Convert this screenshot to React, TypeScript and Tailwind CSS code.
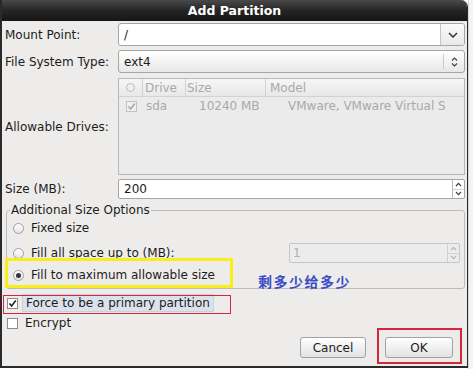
import React from "react";

const Radio = ({ checked = false }: { checked?: boolean }) => (
    <span className="w-[11px] h-[11px] rounded-full border border-[#a0a0a0] bg-linear-to-b from-white to-[#e4e4e4] flex items-center justify-center shrink-0">
        {checked && <span className="w-[5px] h-[5px] rounded-full bg-[#2f3440]" />}
    </span>
);

const Check = ({ checked = false, muted = false }: { checked?: boolean; muted?: boolean }) => (
    <span
        className={`w-[11px] h-[11px] border flex items-center justify-center shrink-0 ${
            muted ? "border-[#c2c2c2] bg-[#f0f0f0]" : "border-[#8c8c8c] bg-white"
        }`}
    >
        {checked && (
            <svg width="9" height="9" viewBox="0 0 9 9">
                <path d="M1.5 4.5 L3.6 7 L7.8 1.5" fill="none" stroke={muted ? "#a8a8a8" : "#222"} strokeWidth="1.6" />
            </svg>
        )}
    </span>
);

const SpinArrows = ({ muted = false }: { muted?: boolean }) => (
    <div className={`w-[12px] h-full flex flex-col border-l ${muted ? "border-[#d0d0d0]" : "border-[#b8b8b8]"}`}>
        <div className="flex-1 flex items-center justify-center border-b border-[#d4d4d4]">
            <svg width="7" height="5" viewBox="0 0 7 5">
                <path d="M1 4 L3.5 1.3 L6 4" fill="none" stroke={muted ? "#b8b8b8" : "#444"} strokeWidth="1.2" />
            </svg>
        </div>
        <div className="flex-1 flex items-center justify-center">
            <svg width="7" height="5" viewBox="0 0 7 5">
                <path d="M1 1 L3.5 3.7 L6 1" fill="none" stroke={muted ? "#b8b8b8" : "#444"} strokeWidth="1.2" />
            </svg>
        </div>
    </div>
);

export default function App() {
    return (
        <div className="relative w-[473px] h-[369px] bg-white flex overflow-hidden font-['DejaVu_Sans','Noto_Sans_CJK_SC',sans-serif] text-[12px] leading-[14px] text-[#1c1c1c]">
            {/* Dialog window */}
            <div className="w-[468px] h-[368px] flex flex-col bg-[#edeceb] border-l-2 border-b-2 border-r border-[#2a2a2a] rounded-tr-[7px] overflow-hidden">
                <div className="h-[21px] shrink-0 bg-linear-to-b from-[#4a4a4a] via-[#252525] to-[#161616] text-white font-bold text-[12.5px] flex items-center justify-center">
                    Add Partition
                </div>

                <div className="flex-1 flex flex-col pl-[3px] pr-[2px] pt-[2px]">
                    {/* Mount point */}
                    <div className="h-[23px] flex items-center">
                        <div className="w-[113px]">Mount Point:</div>
                        <div className="flex-1 h-full flex border border-[#a6a6a6] rounded-[3px] bg-white overflow-hidden">
                            <div className="flex-1 flex items-center pl-[5px]">/</div>
                            <div className="w-[24px] flex items-center justify-center border-l border-[#c4c4c4] bg-linear-to-b from-[#fafafa] to-[#e9e9e9]">
                                <svg width="10" height="6" viewBox="0 0 10 6">
                                    <path d="M1 1 L5 5 L9 1" fill="none" stroke="#333" strokeWidth="1.5" />
                                </svg>
                            </div>
                        </div>
                    </div>

                    {/* File system type */}
                    <div className="h-[23px] mt-[4px] flex items-center">
                        <div className="w-[113px]">File System Type:</div>
                        <div className="flex-1 h-full flex border border-[#a6a6a6] rounded-[3px] bg-linear-to-b from-white to-[#e7e7e7] overflow-hidden">
                            <div className="flex-1 flex items-center pl-[5px]">ext4</div>
                            <div className="w-[21px] my-[3px] flex flex-col items-center justify-center gap-[2px] border-l border-[#c8c8c8]">
                                <svg width="7" height="4" viewBox="0 0 7 4">
                                    <path d="M1 3.5 L3.5 1 L6 3.5" fill="none" stroke="#444" strokeWidth="1.2" />
                                </svg>
                                <svg width="7" height="4" viewBox="0 0 7 4">
                                    <path d="M1 0.5 L3.5 3 L6 0.5" fill="none" stroke="#444" strokeWidth="1.2" />
                                </svg>
                            </div>
                        </div>
                    </div>

                    {/* Allowable drives */}
                    <div className="h-[97px] mt-[5px] flex items-center">
                        <div className="w-[113px]">Allowable Drives:</div>
                        <div className="flex-1 h-full border border-[#b8b8b8] bg-[#ebebeb] text-[#a9a9a9] overflow-hidden">
                            <div className="h-[18px] flex border-b border-[#d2d2d2] bg-linear-to-b from-[#f6f6f6] to-[#e8e8e8]">
                                <div className="w-[24px] flex items-center justify-center border-r border-[#d2d2d2]">
                                    <span className="w-[9px] h-[9px] rounded-full border border-[#bcbcbc]" />
                                </div>
                                <div className="w-[43px] flex items-center pl-[2px] border-r border-[#d2d2d2]">Drive</div>
                                <div className="w-[80px] flex items-center pl-[1px] border-r border-[#d2d2d2]">Size</div>
                                <div className="flex-1 flex items-center pl-[4px]">Model</div>
                            </div>
                            <div className="h-[18px] flex">
                                <div className="w-[24px] flex items-center justify-center">
                                    <Check checked muted />
                                </div>
                                <div className="w-[43px] flex items-center pl-[3px]">sda</div>
                                <div className="w-[80px] flex items-center pl-[13px]">10240 MB</div>
                                <div className="flex-1 flex items-center pl-[22px] whitespace-nowrap">VMware, VMware Virtual S</div>
                            </div>
                        </div>
                    </div>

                    {/* Size */}
                    <div className="h-[20px] mt-[4px] flex items-center">
                        <div className="w-[113px]">Size (MB):</div>
                        <div className="flex-1 h-full flex border border-[#a6a6a6] rounded-[2px] bg-white overflow-hidden">
                            <div className="flex-1 flex items-center pl-[5px]">200</div>
                            <SpinArrows />
                        </div>
                    </div>

                    {/* Additional size options */}
                    <fieldset className="h-[86px] mt-[4px] ml-[1px] border border-[#bdbdbd] rounded-[3px] flex flex-col">
                        <legend className="ml-[3px] px-[1px] leading-[14px]">Additional Size Options</legend>
                        <div className="h-[20px] mt-[1px] flex items-center pl-[6px]">
                            <Radio />
                            <span className="ml-[7px]">Fixed size</span>
                        </div>
                        <div className="h-[20px] mt-[5px] flex items-center pl-[6px]">
                            <Radio />
                            <span className="ml-[7px] w-[258px]">Fill all space up to (MB):</span>
                            <div className="w-[171px] h-full flex border border-[#c6c6c6] rounded-[2px] bg-[#ececec] text-[#b0b0b0]">
                                <div className="flex-1 flex items-center pl-[3px]">1</div>
                                <SpinArrows muted />
                            </div>
                        </div>
                        <div className="h-[20px] mt-[2px] flex items-center pl-[6px]">
                            <Radio checked />
                            <span className="ml-[7px] w-[227px]">Fill to maximum allowable size</span>
                            <span className="mt-[14px] text-[14px] font-bold tracking-[1.5px] text-[#3a4cc4]">剩多少给多少</span>
                        </div>
                    </fieldset>

                    {/* Checkboxes */}
                    <div className="h-[18px] mt-[5px] flex items-center pl-[2px]">
                        <Check checked />
                        <span className="ml-[4px] px-[3px] py-[1px] bg-[#dce2eb] border border-[#c9d0da]">Force to be a primary partition</span>
                    </div>
                    <div className="h-[18px] mt-[2px] flex items-center pl-[2px]">
                        <Check />
                        <span className="ml-[7px]">Encrypt</span>
                    </div>

                    {/* Buttons */}
                    <div className="h-[21px] mt-[5px] flex justify-end gap-[19px] pr-[12px]">
                        <button className="w-[66px] h-full border border-[#a2a2a2] rounded-[3px] bg-linear-to-b from-white to-[#e2e2e2] text-[12px]">
                            Cancel
                        </button>
                        <button className="w-[68px] h-full border border-[#a2a2a2] rounded-[3px] bg-linear-to-b from-white to-[#e2e2e2] text-[12px]">
                            OK
                        </button>
                    </div>
                </div>
            </div>

            {/* Background strip to the right of the dialog */}
            <div className="flex-1 border-l border-[#d6d6d6] bg-[#f3f3f3]" />

            {/* Annotation boxes */}
            <div className="absolute left-[5px] top-[258px] w-[228px] h-[30px] border-[3px] border-[#f7ee1a] pointer-events-none" />
            <div className="absolute left-[3px] top-[295px] w-[228px] h-[19px] border-[1.5px] border-[#d3283c] pointer-events-none" />
            <div className="absolute left-[377px] top-[328px] w-[85px] h-[36px] border-2 border-[#d3283c] pointer-events-none" />
        </div>
    );
}
